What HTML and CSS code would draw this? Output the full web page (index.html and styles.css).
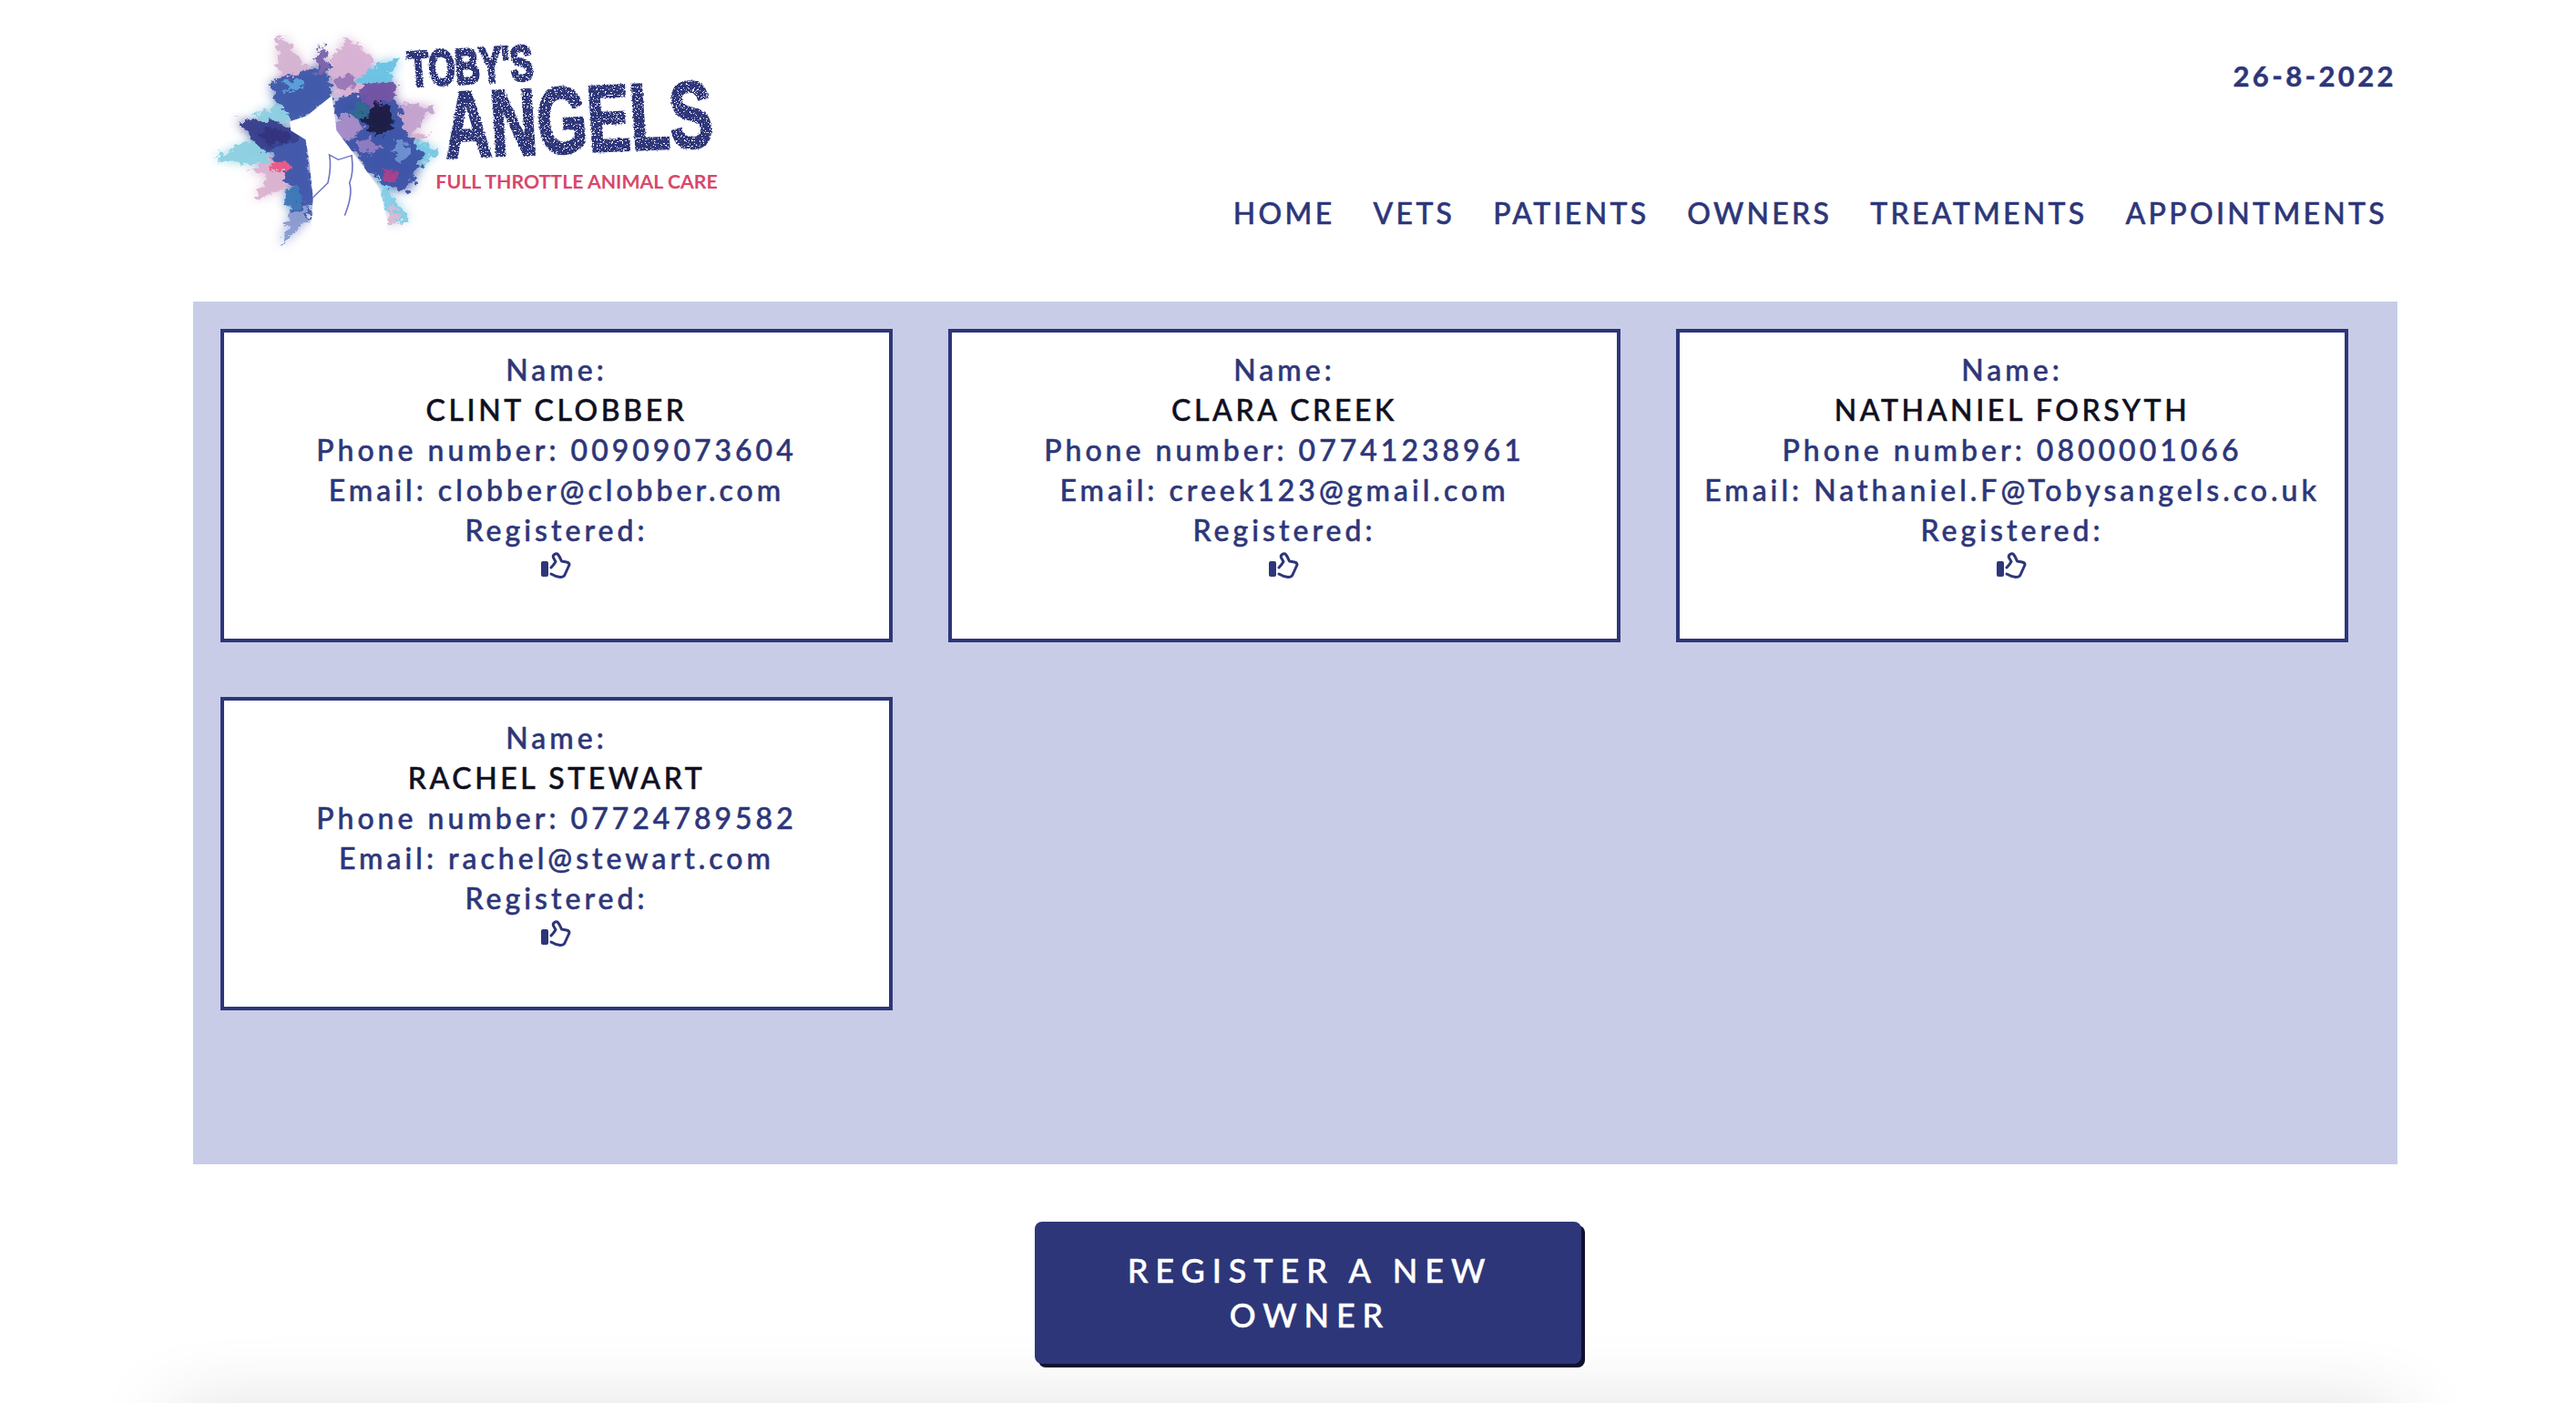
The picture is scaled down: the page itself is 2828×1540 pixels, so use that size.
FILE: index.html
```html
<!DOCTYPE html>
<html>
<head>
<meta charset="utf-8">
<title>Owners</title>
<link rel="stylesheet" href="styles.css">
</head>
<body>
<svg width="0" height="0" class="defs">
	<defs>
		<filter id="splash" x="-10%" y="-10%" width="120%" height="120%">
			<feTurbulence type="fractalNoise" baseFrequency="0.045" numOctaves="5" seed="11"/>
			<feDisplacementMap in="SourceGraphic" scale="46" xChannelSelector="R" yChannelSelector="G"/>
			<feGaussianBlur stdDeviation="1.500"/>
		</filter>
		<filter id="soft" x="-20%" y="-20%" width="140%" height="140%">
			<feGaussianBlur stdDeviation="16"/>
		</filter>
		<filter id="rough" x="-5%" y="-5%" width="110%" height="110%">
			<feTurbulence type="fractalNoise" baseFrequency="0.22" numOctaves="3" seed="3" result="noise"/>
			<feDisplacementMap in="SourceGraphic" in2="noise" scale="8" xChannelSelector="R" yChannelSelector="G" result="shape"/>
			<feColorMatrix in="noise" type="matrix" values="0 0 0 0 0  0 0 0 0 0  0 0 0 0 0  0 0 0 -14 9.600" result="holes"/>
			<feComposite in="shape" in2="holes" operator="in"/>
		</filter>
		<g id="shards">
			<polygon fill="#d5b4d2" points="265,80 335,190 335,240 265,240 255,140"/>
			<polygon fill="#8fcfe2" points="190,345 270,310 330,345 280,372 220,368"/>
			<polygon fill="#8ed0e2" points="85,490 190,430 235,470 235,512 140,505"/>
			<polygon fill="#d8b2d4" points="440,90 512,160 505,245 462,305 410,265 400,180"/>
			<polygon fill="#6cc3e4" points="582,160 552,245 490,305 478,230 522,180"/>
			<polygon fill="#c4a3cf" points="682,320 622,405 555,405 555,305"/>
			<polygon fill="#d9b0cf" points="668,408 600,470 560,420"/>
			<polygon fill="#78c8e4" points="690,460 640,520 590,480 610,430"/>
			<polygon fill="#dbb3d1" points="175,530 262,490 302,500 292,582 192,630 232,552"/>
			<polygon fill="#3f5aaa" points="240,240 340,200 392,170 402,292 330,362 290,362 250,300"/>
			<polygon fill="#7a63ab" points="372,110 392,205 362,225"/>
			<polygon fill="#3d55a8" points="410,295 562,262 602,402 650,482 610,600 540,592 470,482 420,422"/>
			<polygon fill="#7153a4" points="480,250 570,235 570,300 495,330"/>
			<polygon fill="#39408f" points="150,365 240,370 302,392 342,432 292,482 210,462"/>
			<polygon fill="#4359ab" points="232,462 332,420 345,520 352,600 345,682 282,732 302,622 282,562"/>
			<polygon fill="#8a9bd0" points="265,782 290,682 345,640 330,702"/>
			<polygon fill="#86cde6" points="522,540 610,692 560,712 540,622"/>
			<polygon fill="#d9bad3" points="560,640 590,700 550,710"/>
			<ellipse cx="445" cy="390" rx="34" ry="42" fill="#a58cc8"/>
			<ellipse cx="500" cy="450" rx="30" ry="26" fill="#8f7cc0"/>
			<ellipse cx="590" cy="470" rx="24" ry="34" fill="#6c8fd0"/>
			<ellipse cx="300" cy="250" rx="26" ry="18" fill="#5aa0d8"/>
			<ellipse cx="440" cy="240" rx="30" ry="22" fill="#9a78b8"/>
			<ellipse cx="480" cy="340" rx="22" ry="32" fill="#2e6a8e"/>
			<ellipse cx="530" cy="362" rx="40" ry="50" fill="#1e1c45"/>
			<ellipse cx="262" cy="515" rx="26" ry="20" fill="#ea5a86"/>
			<ellipse cx="565" cy="548" rx="20" ry="20" fill="#a83f8c"/>
			<ellipse cx="300" cy="620" rx="22" ry="42" fill="#3e78b8"/>
			<ellipse cx="250" cy="420" rx="40" ry="24" fill="#33307e"/>
		</g>
		<symbol id="thumb" viewBox="0 0 34 30">
			<rect x="0" y="10" width="8" height="17" rx="2" fill="#2d3679"/>
			<path d="M11 24 Q16 27 21 27.500 Q25 27.500 26 25 L31 14 Q31 11.500 28 11 L22.500 10 Q20.500 5 18.500 2.500 Q17 1 14 3 Q12.500 4.500 14 7 L16 10.500 Q14 14 11 17" fill="none" stroke="#2d3679" stroke-width="3" stroke-linecap="round" stroke-linejoin="round"/>
		</symbol>
	</defs>
</svg>

<div class="page">
	<header class="top">
		<svg class="logo" viewBox="0 0 1568 840" preserveAspectRatio="none">
			<use href="#shards" filter="url(#soft)" opacity="0.85"/>
			<use href="#shards" filter="url(#splash)" opacity="0.95"/>
			<polygon fill="#fff" points="290,370 335,352 385,302 403,285 415,400 470,490 530,590 552,700 540,800 345,800 352,620 342,500 332,430 292,400"/>
			<path d="M350 622 L392 572 Q402 520 396 480 L420 496 L456 482 Q462 540 450 572 Q460 610 437 680" fill="none" stroke="#6f74c4" stroke-width="4"/>
			<g class="logo-stencil" filter="url(#rough)">
				<text x="612" y="256" font-size="165" textLength="336" lengthAdjust="spacingAndGlyphs" transform="rotate(-4 612 256)">TOBY'S</text>
				<text x="710" y="490" font-size="310" textLength="722" lengthAdjust="spacingAndGlyphs" transform="rotate(-3 710 490)">ANGELS</text>
			</g>
			<text class="logo-tag" x="682" y="592" font-size="64" textLength="758" lengthAdjust="spacingAndGlyphs">FULL THROTTLE ANIMAL CARE</text>
		</svg>
		<div class="top-right">
			<div class="date">26-8-2022</div>
			<nav class="nav">
				<a>HOME</a>
				<a>VETS</a>
				<a>PATIENTS</a>
				<a>OWNERS</a>
				<a>TREATMENTS</a>
				<a>APPOINTMENTS</a>
			</nav>
		</div>
	</header>

	<main class="panel">
		<div class="card">
			<div>Name:</div>
			<div class="name">CLINT CLOBBER</div>
			<div>Phone number: 00909073604</div>
			<div>Email: clobber@clobber.com</div>
			<div>Registered:</div>
			<svg class="thumb"><use href="#thumb"/></svg>
		</div>
		<div class="card">
			<div>Name:</div>
			<div class="name">CLARA CREEK</div>
			<div>Phone number: 07741238961</div>
			<div>Email: creek123@gmail.com</div>
			<div>Registered:</div>
			<svg class="thumb"><use href="#thumb"/></svg>
		</div>
		<div class="card">
			<div>Name:</div>
			<div class="name">NATHANIEL FORSYTH</div>
			<div>Phone number: 0800001066</div>
			<div>Email: Nathaniel.F@Tobysangels.co.uk</div>
			<div>Registered:</div>
			<svg class="thumb"><use href="#thumb"/></svg>
		</div>
		<div class="card">
			<div>Name:</div>
			<div class="name">RACHEL STEWART</div>
			<div>Phone number: 07724789582</div>
			<div>Email: rachel@stewart.com</div>
			<div>Registered:</div>
			<svg class="thumb"><use href="#thumb"/></svg>
		</div>
	</main>

	<div class="actions">
		<button class="button">REGISTER A NEW OWNER</button>
	</div>
	<div class="footer-edge"></div>
</div>
</body>
</html>
```

FILE: styles.css
```css
html, body {
	margin: 0;
	height: 1540px;
	overflow: hidden;
	background-color: #fff;
}
body {
	font-family: "Lato", "Liberation Sans", sans-serif;
	font-weight: 500;
	color: #2d3679;
	-webkit-text-stroke: 0.5px currentColor;
}
.defs {
	display: block;
	height: 0;
}
.page {
	width: 2420px;
	margin-left: 212px;
}

/* header */
.top {
	display: flex;
	justify-content: space-between;
	height: 331px;
	box-sizing: border-box;
	padding-top: 10px;
}
.logo {
	width: 640px;
	height: 280px;
	margin-left: -12px;
	-webkit-text-stroke: 0;
}
.logo-stencil {
	font-family: "Liberation Sans", sans-serif;
	font-weight: 700;
	fill: #2d3679;
	stroke: #2d3679;
	stroke-width: 9px;
}
.logo-tag {
	font-family: "Lato", sans-serif;
	font-weight: 700;
	fill: #d9476b;
}
.top-right {
	display: flex;
	flex-direction: column;
	align-items: flex-end;
	margin-top: -10px;
}
.date {
	margin-top: 65px;
	margin-right: 1px;
	font-size: 31px;
	line-height: 37px;
	font-weight: 700;
	letter-spacing: 3.400px;
}
.nav {
	display: flex;
	gap: 42px;
	margin-top: 113px;
	margin-right: 11px;
	font-size: 32px;
	line-height: 38px;
	letter-spacing: 3.300px;
}

/* owners */
.panel {
	display: grid;
	grid-template-columns: repeat(3, 738px);
	grid-auto-rows: 344px;
	column-gap: 61px;
	row-gap: 60px;
	height: 947px;
	box-sizing: border-box;
	padding: 30px 30px 0;
	background-color: #c8cce7;
}
.card {
	box-sizing: border-box;
	padding-top: 19px;
	border: 4px solid #2d3679;
	background-color: #fff;
	text-align: center;
	font-size: 32px;
	line-height: 44px;
	letter-spacing: 4px;
}
.name {
	color: #10101f;
	letter-spacing: 3.600px;
}
.thumb {
	display: block;
	width: 34px;
	height: 30px;
	margin: 2px auto 0 auto;
}

/* button */
.actions {
	padding-top: 63px;
	padding-left: 924px;
}
.button {
	display: block;
	width: 600px;
	height: 156px;
	padding: 0 36px 0 40px;
	border: none;
	border-radius: 8px;
	box-shadow: 4px 4px 0 #0f1130;
	background-color: #2d3679;
	color: #fff;
	font-family: "Lato", "Liberation Sans", sans-serif;
	font-size: 36px;
	font-weight: 500;
	line-height: 49px;
	letter-spacing: 7.900px;
	position: relative;
	z-index: 1;
	-webkit-text-stroke: 0.5px currentColor;
}
.footer-edge {
	width: 2443px;
	height: 40px;
	margin: 63px 0 0 -22px;
	box-shadow: 0 0 90px rgba(0, 0, 0, 0.24);
}
```
